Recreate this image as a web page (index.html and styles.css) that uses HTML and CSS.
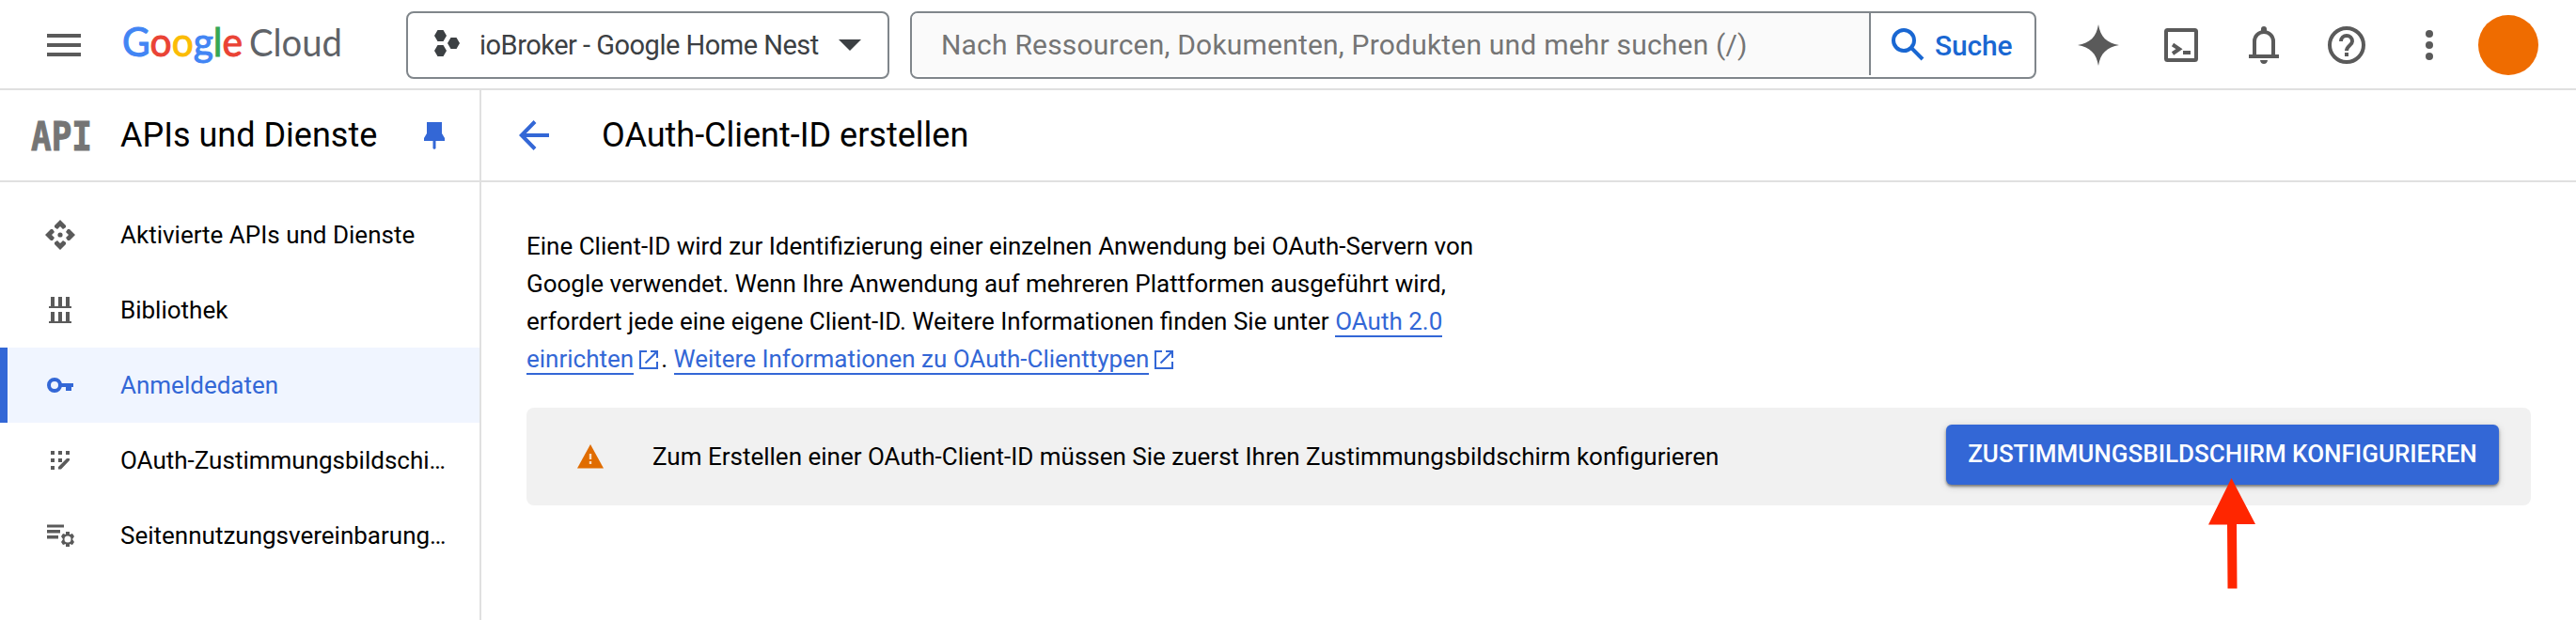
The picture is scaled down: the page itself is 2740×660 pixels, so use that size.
FILE: index.html
```html
<!DOCTYPE html>
<html lang="de">
<head>
<meta charset="utf-8">
<title>OAuth-Client-ID erstellen</title>
<link rel="stylesheet" href="styles.css">
</head>
<body>
<header class="topbar">
  <svg class="menu-icon" width="36" height="24" viewBox="0 0 36 24"><path d="M0 0h36v4H0zM0 10h36v4H0zM0 20h36v4H0z" fill="#5a5a5a"/></svg>
  <svg class="logo" width="240" height="72" viewBox="0 0 240 72">
    <text class="logo-google" x="0" y="49" textLength="128" lengthAdjust="spacingAndGlyphs"><tspan class="blue">G</tspan><tspan class="red">o</tspan><tspan class="yellow">o</tspan><tspan class="blue">g</tspan><tspan class="green">l</tspan><tspan class="red">e</tspan></text>
    <text class="logo-cloud" x="135" y="49" textLength="99" lengthAdjust="spacingAndGlyphs">Cloud</text>
  </svg>
  <div class="picker">
    <svg width="28" height="28" viewBox="0 0 28 28" fill="#3c4043"><path d="M3.500 0h6L13 6l-3.500 6h-6L0 6zM3.500 16h6L13 22l-3.500 6h-6L0 22zM17.500 8h6L27 14l-3.500 6h-6L14 14z"/></svg>
    <span class="picker-name">ioBroker - Google Home Nest</span>
    <svg class="caret" width="24" height="12" viewBox="0 0 24 12"><path d="M0 0h24L12 12z" fill="#3c4043"/></svg>
  </div>
  <div class="search">
    <div class="search-input">Nach Ressourcen, Dokumenten, Produkten und mehr suchen (/)</div>
    <div class="search-button">
      <svg width="36" height="36" viewBox="0 0 36 36" fill="none" stroke="#1967d2" stroke-width="4"><circle cx="13" cy="13" r="11"/><path d="M21 21l12 12"/></svg>
      <span>Suche</span>
    </div>
  </div>
  <div class="tools">
    <svg width="44" height="44" viewBox="0 0 44 44"><path d="M22 0C24 13 31 20 44 22C31 24 24 31 22 44C20 31 13 24 0 22C13 20 20 13 22 0z" fill="#5a5a5a"/></svg>
    <svg width="36" height="36" viewBox="0 0 36 36" fill="none" stroke="#5a5a5a" stroke-width="4"><rect x="2" y="2" width="32" height="32" rx="1.500"/><path d="M9 17.500l7 4.700-7 4.800"/><path d="M20 26h8"/></svg>
    <svg width="32" height="40" viewBox="0 0 32 40"><path d="M0 30h32v4H0zM12 36h8q-.5 4-4 4t-4-4z" fill="#5a5a5a"/><path d="M6 31V16a10 10 0 0 1 20 0v15" fill="none" stroke="#5a5a5a" stroke-width="4"/><path d="M13 6V3a3 3 0 0 1 6 0v3z" fill="#5a5a5a"/></svg>
    <svg width="40" height="40" viewBox="0 0 40 40" fill="none" stroke="#5a5a5a" stroke-width="4"><circle cx="20" cy="20" r="18"/><path d="M14 16a6 6 0 0 1 12 0c0 4-6 5-6 10"/><path d="M20 28v4"/></svg>
    <svg width="8" height="32" viewBox="0 0 8 32" fill="#5a5a5a"><circle cx="4" cy="4" r="4"/><circle cx="4" cy="16" r="4"/><circle cx="4" cy="28" r="4"/></svg>
    <div class="avatar"></div>
  </div>
</header>
<div class="body">
  <nav class="sidebar">
    <div class="product">
      <svg class="api" width="68" height="60" viewBox="0 0 68 60"><text x="2" y="46" textLength="65" lengthAdjust="spacingAndGlyphs">API</text></svg>
      <span class="product-name">APIs und Dienste</span>
      <svg class="pin" width="24" height="32" viewBox="0 0 24 32" fill="#3367d6"><path d="M4 2h16v12l3 5v3H1v-3l3-5z"/><path d="M10.500 22h3v8l-1.500 1-1.500-1z"/></svg>
    </div>
    <div class="nav">
      <div class="item">
        <svg width="32" height="32" viewBox="0 0 32 32" fill="#5a5a5a"><path d="M16 0l6 6v2l-3 2-3-3-3 3-3-2V6zM16 32l6-6v-2l-3-2-3 3-3-3-3 2v2zM0 16l6-6h2l2 3-3 3 3 3-2 3H6zM32 16l-6-6h-2l-2 3 3 3-3 3 2 3h2z"/><circle cx="16" cy="16" r="2.600"/></svg>
        <span>Aktivierte APIs und Dienste</span>
      </div>
      <div class="item">
        <svg width="32" height="32" viewBox="0 0 32 32" fill="#5a5a5a"><path d="M4 12h24v2H4zM6 2h4v10H6zM14 2h4v10h-4zM22 2h4v10h-4zM4 28h24v2H4zM6 18h4v10H6zM14 18h4v10h-4zM22 18h4v10h-4z"/></svg>
        <span>Bibliothek</span>
      </div>
      <div class="item active">
        <svg width="32" height="32" viewBox="0 0 32 32"><circle cx="10" cy="16" r="6" fill="none" stroke="#3367d6" stroke-width="4"/><path d="M16 14h14v4h-2v4h-6v-4h-6z" fill="#3367d6"/></svg>
        <span>Anmeldedaten</span>
      </div>
      <div class="item">
        <svg width="32" height="32" viewBox="0 0 32 32" fill="#5a5a5a"><path d="M6 6h4v4H6zM14 6h4v4h-4zM22 6h4v4h-4zM6 14h4v4H6zM14 14h4v4h-4zM6 22h4v4H6zM14 23l9-9h3v2L17 25.500h-3z"/></svg>
        <span>OAuth-Zustimmungsbildschi…</span>
      </div>
      <div class="item">
        <svg width="32" height="32" viewBox="0 0 32 32" fill="#5a5a5a"><path d="M2 4.500h18v3H2zM2 10h14v3.500H2zM2 16h12v3.500H2z"/><path d="M22 12h4v3l3-1 2 3-2 3 2 3-2 3-3-1v3h-4v-3l-3 1-2-3 2-3-2-3 2-3 3 1z"/><circle cx="24" cy="20" r="3.500" fill="#fff"/></svg>
        <span>Seitennutzungsvereinbarung…</span>
      </div>
    </div>
  </nav>
  <main class="main">
    <div class="title">
      <svg width="32" height="32" viewBox="0 0 32 32" fill="none" stroke="#3367d6" stroke-width="4"><path d="M32 16H3M17 1.500L2.800 16 17 30.500"/></svg>
      <h1>OAuth-Client-ID erstellen</h1>
    </div>
    <div class="content">
      <p class="intro">Eine Client-ID wird zur Identifizierung einer einzelnen Anwendung bei OAuth-Servern von<br>Google verwendet. Wenn Ihre Anwendung auf mehreren Plattformen ausgeführt wird,<br>erfordert jede eine eigene Client-ID. Weitere Informationen finden Sie unter <a>OAuth 2.0</a><br><a>einrichten</a><svg class="ext" width="20" height="20" viewBox="0 0 20 20" fill="none" stroke="#3367d6" stroke-width="2"><path d="M8 1H1v18h18v-7M12 1h7v7M19 1L6.500 13.500"/></svg>. <a>Weitere Informationen zu OAuth-Clienttypen</a><svg class="ext" width="20" height="20" viewBox="0 0 20 20" fill="none" stroke="#3367d6" stroke-width="2"><path d="M8 1H1v18h18v-7M12 1h7v7M19 1L6.500 13.500"/></svg></p>
      <div class="banner">
        <svg class="warn" width="28" height="26" viewBox="0 0 28 26"><path d="M14 0l14 25.500H0z" fill="#e06c00"/><path d="M12.800 10h2.400v6h-2.400zM12.800 18h2.400v3h-2.400z" fill="#f8dcc2"/></svg>
        <span class="banner-text">Zum Erstellen einer OAuth-Client-ID müssen Sie zuerst Ihren Zustimmungsbildschirm konfigurieren</span>
        <div class="button">ZUSTIMMUNGSBILDSCHIRM KONFIGURIEREN
          <svg class="pointer" width="50" height="118" viewBox="0 0 50 118"><path d="M24.500 0L50 49H30l.5 68.500h-10L20 49.500H0z" fill="#ff2600"/></svg>
        </div>
      </div>
    </div>
  </main>
</div>
</body>
</html>
```
FILE: styles.css
```css
* { box-sizing: border-box; }
body {
  margin: 0;
  width: 2740px;
  height: 660px;
  overflow: hidden;
  background: #fff;
  color: #000;
  font-family: Roboto, sans-serif;
  font-size: 26px;
}
svg { display: block; flex: none; overflow: visible; }
span, h1 { white-space: nowrap; }

.topbar {
  display: flex;
  align-items: center;
  height: 96px;
  padding-left: 50px;
  border-bottom: 2px solid #e0e0e0;
}
.menu-icon { margin-top: 2px; }
.logo { margin-left: 44px; }
.logo text { font-family: Lato, sans-serif; font-weight: 400; }
.logo-google { font-size: 42px; stroke-width: 1px; }
.logo-cloud { font-size: 40px; fill: #5f6368; }
.blue { fill: #4285f4; stroke: #4285f4; }
.red { fill: #ea4335; stroke: #ea4335; }
.yellow { fill: #fbbc04; stroke: #fbbc04; }
.green { fill: #34a853; stroke: #34a853; }
.picker {
  display: flex;
  align-items: center;
  width: 514px;
  height: 72px;
  margin: 2px 22px 0 62px;
  padding: 0 28px;
  border: 2px solid #80868b;
  border-radius: 8px;
  color: #3c4043;
  font-size: 29px;
}
.picker svg:first-child { margin-top: -4px; }
.picker-name { margin-left: 20px; line-height: 68px; letter-spacing: -0.5px; }
.caret { margin-left: auto; }
.search {
  display: flex;
  width: 1198px;
  height: 72px;
  margin-top: 2px;
  border: 2px solid #80868b;
  border-radius: 8px;
  font-size: 30px;
  letter-spacing: 0.2px;
  overflow: hidden;
}
.search-input {
  width: 1020px;
  height: 66px;
  padding-left: 31px;
  border-right: 2px solid #80868b;
  background: #fafafa;
  color: #757575;
  line-height: 68px;
  white-space: nowrap;
}
.search-button {
  display: flex;
  align-items: center;
  gap: 10px;
  flex: 1;
  padding-left: 22px;
  color: #1967d2;
  font-weight: 500;
}
.search-button span { letter-spacing: -0.2px; }
.tools {
  display: flex;
  align-items: center;
  margin: 2px 0 0 44px;
}
.tools svg:nth-child(2) { margin-left: 48px; }
.tools svg:nth-child(3) { margin-left: 54px; }
.tools svg:nth-child(4) { margin-left: 52px; }
.tools svg:nth-child(5) { margin-left: 64px; }
.avatar { width: 64px; height: 64px; margin-left: 48px; border-radius: 50%; background: #ef6c00; }

.body { display: flex; height: 564px; }
.sidebar { width: 512px; border-right: 2px solid #e0e0e0; }
.product, .title {
  display: flex;
  align-items: center;
  height: 98px;
  border-bottom: 2px solid #e0e0e0;
}
.product { padding: 0 36px 0 31px; }
.api text {
  font-family: "DejaVu Sans Mono", monospace;
  font-weight: 700;
  font-size: 43px;
  fill: #757575;
  stroke: #757575;
  stroke-width: 1px;
}
.product-name { margin-left: 29px; font-size: 36px; }
.pin { margin-left: auto; }
.nav { padding-top: 16px; }
.item {
  display: flex;
  align-items: center;
  gap: 48px;
  height: 80px;
  padding-left: 48px;
}
.active {
  padding-left: 40px;
  border-left: 8px solid #3367d6;
  background: #f0f5ff;
  color: #3367d6;
}

.main { flex: 1; }
.title { padding-left: 40px; }
.title h1 { margin: 0 0 0 56px; font-size: 36px; font-weight: 400; }
.content { padding: 48px 48px 0; }
.intro { margin: 0; line-height: 40px; white-space: nowrap; }
.intro a { color: #3367d6; border-bottom: 2px solid #3367d6; }
.ext { display: inline-block; margin: 0 3px 0 6px; vertical-align: -2px; }
.banner {
  display: flex;
  align-items: center;
  height: 104px;
  margin-top: 32px;
  padding: 0 34px 0 54px;
  border-radius: 8px;
  background: #f1f1f1;
}
.banner-text { margin-left: 52px; }
.button {
  position: relative;
  width: 588px;
  height: 64px;
  margin: -4px 0 0 auto;
  border-radius: 6px;
  background: #3367d6;
  box-shadow: 0 2px 3px rgba(0, 0, 0, .45), 0 2px 8px rgba(0, 0, 0, .15);
  color: #fff;
  font-weight: 500;
  line-height: 62px;
  text-align: center;
  white-space: nowrap;
}
.pointer { position: absolute; left: 279px; top: 57px; }
```
